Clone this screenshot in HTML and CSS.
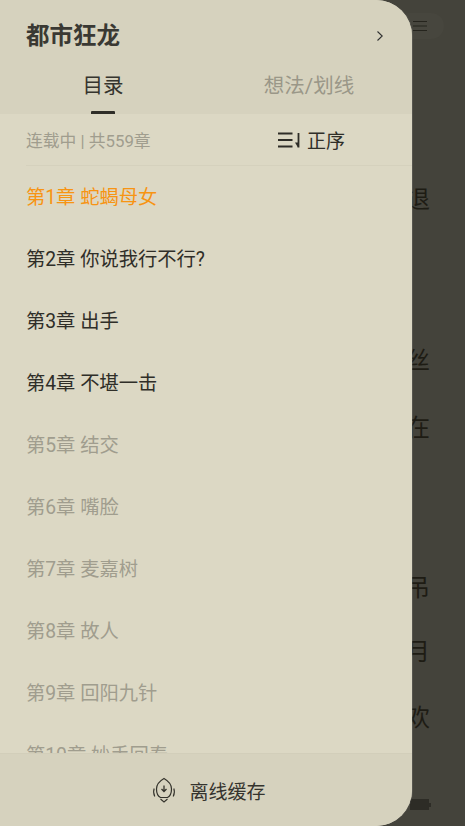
FILE: index.html
```html
<!DOCTYPE html>
<html lang="zh">
<head>
<meta charset="utf-8">
<title>都市狂龙</title>
<link rel="stylesheet" href="styles.css">
</head>
<body>
<main class="reader">
  <div class="menu-pill">
    <svg class="menu-icon" width="16" height="12" viewBox="0 0 16 12"><path d="M1 1.500H15M1 6H15M1 10.500H15" stroke="#25241d" stroke-width="1.200" fill="none"/></svg>
  </div>
  <div class="page-text">
    <p class="line l1">退</p>
    <p class="line l2">丝</p>
    <p class="line l3">在</p>
    <p class="line l4">吊</p>
    <p class="line l5">月</p>
    <p class="line l6">欢</p>
  </div>
  <div class="battery"><span class="battery-body"></span><span class="battery-tip"></span></div>
</main>
<aside class="drawer">
  <header class="drawer-head">
    <div class="title-row">
      <h1 class="book-title">都市狂龙</h1>
      <svg class="chevron" width="8" height="12" viewBox="0 0 8 12"><path d="M1.500 1.500L6.200 6L1.500 10.500" stroke="#333" stroke-width="1.100" fill="none"/></svg>
    </div>
    <nav class="tabs">
      <div class="tab active">目录<span class="tab-mark"></span></div>
      <div class="tab">想法/划线</div>
    </nav>
  </header>
  <div class="status-row">
    <span class="status">连载中 | 共559章</span>
    <span class="sort">
      <svg class="sort-icon" width="22" height="16" viewBox="0 0 22 16"><path d="M0 1.500H14.500M0 8H14.500M0 14.500H14.500" stroke="#2e2d27" stroke-width="1.800" fill="none"/><path d="M20.500 1V15.500" stroke="#2e2d27" stroke-width="1.800" fill="none"/><path d="M17 10.500L20 15.500V10.500Z" fill="#2e2d27"/></svg>
      正序
    </span>
  </div>
  <ul class="chapters">
    <li class="chapter current">第1章 蛇蝎母女</li>
    <li class="chapter">第2章 你说我行不行?</li>
    <li class="chapter">第3章 出手</li>
    <li class="chapter">第4章 不堪一击</li>
    <li class="chapter muted">第5章 结交</li>
    <li class="chapter muted">第6章 嘴脸</li>
    <li class="chapter muted">第7章 麦嘉树</li>
    <li class="chapter muted">第8章 故人</li>
    <li class="chapter muted">第9章 回阳九针</li>
    <li class="chapter muted">第10章 妙手回春</li>
  </ul>
  <footer class="drawer-foot">
    <svg class="cache-icon" width="24" height="28" viewBox="0 0 24 28"><path d="M12 2.500C15.500 4.500 19.500 7.500 19.500 13C19.500 17 17.500 20.500 15.500 21.500H8.500C6.500 20.500 4.500 17 4.500 13C4.500 7.500 8.500 4.500 12 2.500Z" stroke="#33322b" stroke-width="1.200" fill="none"/><path d="M12 9.500V15M9.500 13L12 15.500L14.500 13" stroke="#33322b" stroke-width="1.300" fill="none"/><path d="M2.200 12.500C1.200 15 1.500 18 2.800 20.500M21.800 12.500C22.800 15 22.500 18 21.200 20.500M8.500 23L12 26L15.500 23" stroke="#33322b" stroke-width="1.100" fill="none"/></svg>
    <span class="cache-label">离线缓存</span>
  </footer>
</aside>
</body>
</html>
```
FILE: styles.css
```css
* { box-sizing: border-box; }
html, body { margin: 0; height: 100%; }
body {
  width: 465px;
  height: 826px;
  overflow: hidden;
  position: relative;
  background: #44433b;
  font-family: Roboto, "Noto Sans CJK SC", sans-serif;
  font-weight: 400;
  color: #2f2e28;
}
.reader { height: 826px; display: flex; flex-direction: column; position: relative; }
.menu-pill {
  position: absolute;
  left: 396px; top: 13px;
  width: 48px; height: 26px;
  border-radius: 13px;
  background: #47463e;
  display: flex; align-items: center; justify-content: flex-end;
  padding-right: 16px;
}
.page-text { padding: 183px 35px 0 0; display: flex; flex-direction: column; align-items: flex-end; }
.line { margin: 0; font-size: 24px; line-height: 34px; height: 34px; color: #1e1c14; width: 24px; }
.l2 { margin-top: 127px; }
.l3 { margin-top: 33px; }
.l4 { margin-top: 126px; }
.l5 { margin-top: 30px; }
.l6 { margin-top: 32px; }
.battery { position: absolute; left: 410px; top: 799px; display: flex; align-items: center; }
.battery-body { width: 19px; height: 11px; background: #2d2c26; }
.battery-tip { width: 2px; height: 4px; background: #2d2c26; }

.drawer {
  position: absolute;
  left: 0; top: 0;
  width: 412px; height: 826px;
  background: #dcd8c4;
  border-radius: 0 36px 36px 0;
  overflow: hidden;
  display: flex; flex-direction: column;
  box-shadow: 1px 0 0 rgba(255,255,255,0.1);
}
.drawer-head { background: #d6d2be; height: 114px; flex: none; }
.title-row {
  height: 71px;
  padding: 0 28px 0 26px;
  display: flex; align-items: center; justify-content: space-between;
}
.book-title { margin: 0; font-size: 23.500px; font-weight: 700; color: #3a3933; line-height: 32px; }
.tabs { display: flex; height: 43px; }
.tab {
  width: 206px;
  position: relative;
  text-align: center;
  font-size: 20.500px;
  line-height: 28px;
  padding-top: 1px;
  color: #9a9788;
}
.tab.active { color: #35342e; }
.tab-mark {
  position: absolute;
  left: 91px; bottom: 0;
  width: 24px; height: 3px;
  border-radius: 1px 1px 0 0;
  background: #2f2e28;
}
.status-row {
  flex: none;
  height: 52px;
  margin-left: 26px;
  padding-right: 67px;
  border-bottom: 1px solid #d5d1bd;
  display: flex; align-items: center; justify-content: space-between;
}
.status { font-size: 16.800px; color: #a09d8e; }
.sort { display: flex; align-items: center; gap: 7px; font-size: 19px; color: #2f2e28; }
.chapters {
  list-style: none;
  margin: 0; padding: 1px 0 0 26px;
  flex: 1;
  overflow: hidden;
}
.chapter { height: 62px; line-height: 62px; font-size: 19.300px; color: #2f2e28; white-space: nowrap; }
.chapter.current { color: #f79413; }
.chapter.muted { color: #a09d8e; }
.drawer-foot {
  flex: none;
  height: 73px;
  background: #d6d2be;
  border-top: 1px solid #d2ceba;
  display: flex; align-items: center; justify-content: center;
  gap: 13px;
  padding: 0 0 0 6px;
}
.cache-label { font-size: 19px; color: #35342e; }
```
